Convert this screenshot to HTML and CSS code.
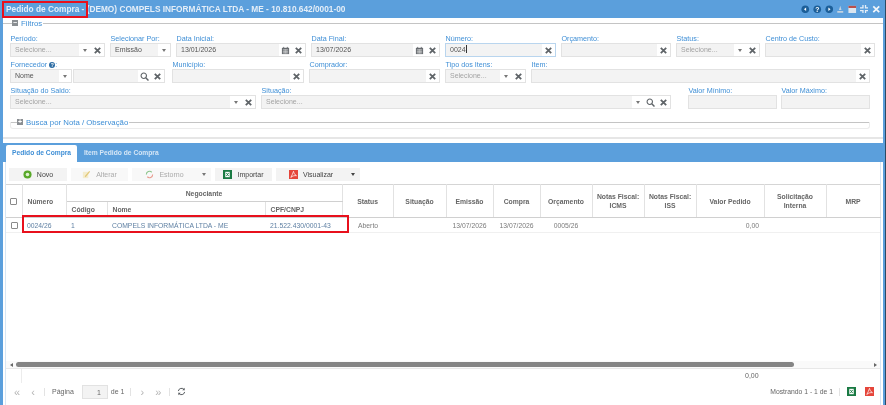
FILE: index.html
```html
<!DOCTYPE html>
<html lang="pt-BR">
<head>
    <meta charset="UTF-8">
    <meta name="viewport" content="width=device-width, initial-scale=1.0">
    <title>Pedido de Compra</title>
    <link rel="stylesheet" href="styles.css">
</head>
<body>
    <svg class="sprites" width="0" height="0">
        <symbol id="i-x" viewBox="0 0 10 10"><path d="M2 2l6 6M8 2l-6 6" stroke="#5f6468" stroke-width="2" fill="none"/></symbol>
        <symbol id="i-search" viewBox="0 0 10 10"><circle cx="4.2" cy="4.2" r="3" stroke="#5f6468" stroke-width="1.2" fill="none"/><path d="M6.4 6.4l3 3" stroke="#5f6468" stroke-width="1.6"/></symbol>
        <symbol id="i-cal" viewBox="0 0 10 10"><path d="M1 2h8v7H1z" fill="#686c70"/><path d="M2 4.2h6M2 6h6M2 7.6h6M3.5 3.5v5M5 3.5v5M6.5 3.5v5" stroke="#eee" stroke-width=".5"/><path d="M3 1v2M7 1v2" stroke="#686c70"/></symbol>
        <symbol id="i-excel" viewBox="0 0 10 10"><path d="M0 0h10v10H0z" fill="#1a7a43"/><path d="M2.5 2v6h5V2z" fill="#fff"/><path d="M3.6 3.2l2.8 3.6M6.4 3.2L3.6 6.8" stroke="#1a7a43" stroke-width="1"/></symbol>
        <symbol id="i-pdf" viewBox="0 0 10 10"><path d="M0 0h10v10H0z" fill="#e5453a"/><path d="M5 1.5c.6 2 1 3.5 3.3 4.8-2-.3-4.5.2-6.3 2 1-2.3 2.5-4.5 3-6.800z" fill="none" stroke="#fff" stroke-width=".8"/></symbol>
    </svg>

    <div class="app">
        <header class="title-bar">
            <h1>Pedido de Compra - (DEMO) COMPELS INFORMÁTICA LTDA - ME - 10.810.642/0001-00</h1>
            <div class="title-icons">
                <svg viewBox="0 0 10 10"><circle cx="5" cy="5" r="4.5" fill="#1c5f99"/><path d="M6 3L3.5 5 6 7z" fill="#fff"/></svg>
                <svg viewBox="0 0 10 10"><circle cx="5" cy="5" r="4.5" fill="#1c5f99"/><text x="5" y="8" class="help-mark">?</text></svg>
                <svg viewBox="0 0 10 10"><circle cx="5" cy="5" r="4.5" fill="#1c5f99"/><path d="M4 3l2.5 2L4 7z" fill="#fff"/></svg>
                <svg viewBox="0 0 10 10"><path d="M5 1l1.5 5h-3zM1.5 7h7v2h-7z" fill="#c3d2e0"/></svg>
                <svg viewBox="0 0 10 10"><path d="M.5 1h9v8.5h-9z" fill="#dbe6f0"/><path d="M.5 1h9v2.5h-9z" fill="#b9504b"/></svg>
                <svg viewBox="0 0 10 10"><path d="M3.5 0v3.5H0M6.5 0v3.5H10M3.5 10V6.5H0M6.5 10V6.5H10" stroke="#e6eff8" stroke-width="1.5" fill="none"/></svg>
                <svg viewBox="0 0 10 10"><path d="M1.5 1.5l7 7M8.5 1.5l-7 7" stroke="#f2f6fa" stroke-width="2"/></svg>
            </div>
        </header>

        <main class="panel">
            <section class="filters">
                <div class="fieldset-head filter-head"><span class="rule-start"></span><span class="toggle">−</span><span class="legend">Filtros</span><span class="rule"></span></div>

                <div class="form-row row-a">
                    <div class="field">
                        <label>Período:</label>
                        <div class="control"><span class="value muted">Selecione...</span><span class="caret"></span><svg class="ico"><use href="#i-x"/></svg></div>
                    </div>
                    <div class="field">
                        <label>Selecionar Por:</label>
                        <div class="control"><span class="value">Emissão</span><span class="caret"></span></div>
                    </div>
                    <div class="field">
                        <label>Data Inicial:</label>
                        <div class="control"><span class="value">13/01/2026</span><svg class="ico"><use href="#i-cal"/></svg><svg class="ico"><use href="#i-x"/></svg></div>
                    </div>
                    <div class="field">
                        <label>Data Final:</label>
                        <div class="control"><span class="value">13/07/2026</span><svg class="ico"><use href="#i-cal"/></svg><svg class="ico"><use href="#i-x"/></svg></div>
                    </div>
                    <div class="field">
                        <label>Número:</label>
                        <div class="control focused"><span class="value">0024<i class="cursor"></i></span><svg class="ico"><use href="#i-x"/></svg></div>
                    </div>
                    <div class="field">
                        <label>Orçamento:</label>
                        <div class="control"><span class="value"></span><svg class="ico"><use href="#i-x"/></svg></div>
                    </div>
                    <div class="field">
                        <label>Status:</label>
                        <div class="control"><span class="value muted">Selecione...</span><span class="caret"></span><svg class="ico"><use href="#i-x"/></svg></div>
                    </div>
                    <div class="field">
                        <label>Centro de Custo:</label>
                        <div class="control"><span class="value"></span><svg class="ico"><use href="#i-x"/></svg></div>
                    </div>
                </div>

                <div class="form-row row-b">
                    <div class="field">
                        <label>Fornecedor <span class="info">?</span>:</label>
                        <div class="joined">
                            <div class="control name-select"><span class="value">Nome</span><span class="caret"></span></div>
                            <div class="control"><span class="value"></span><svg class="ico"><use href="#i-search"/></svg><svg class="ico"><use href="#i-x"/></svg></div>
                        </div>
                    </div>
                    <div class="field">
                        <label>Município:</label>
                        <div class="control"><span class="value"></span><svg class="ico"><use href="#i-x"/></svg></div>
                    </div>
                    <div class="field">
                        <label>Comprador:</label>
                        <div class="control"><span class="value"></span><svg class="ico"><use href="#i-x"/></svg></div>
                    </div>
                    <div class="field">
                        <label>Tipo dos Itens:</label>
                        <div class="control"><span class="value muted">Selecione...</span><span class="caret"></span><svg class="ico"><use href="#i-x"/></svg></div>
                    </div>
                    <div class="field">
                        <label>Item:</label>
                        <div class="control"><span class="value"></span><svg class="ico"><use href="#i-x"/></svg></div>
                    </div>
                </div>

                <div class="form-row row-c">
                    <div class="field">
                        <label>Situação do Saldo:</label>
                        <div class="control"><span class="value muted">Selecione...</span><span class="caret"></span><svg class="ico"><use href="#i-x"/></svg></div>
                    </div>
                    <div class="field">
                        <label>Situação:</label>
                        <div class="control"><span class="value muted">Selecione...</span><span class="caret"></span><svg class="ico"><use href="#i-search"/></svg><svg class="ico"><use href="#i-x"/></svg></div>
                    </div>
                    <div class="field">
                        <label>Valor Mínimo:</label>
                        <div class="control"><span class="value"></span></div>
                    </div>
                    <div class="field">
                        <label>Valor Máximo:</label>
                        <div class="control"><span class="value"></span></div>
                    </div>
                </div>

                <div class="fieldset-head search-head"><span class="rule-start"></span><span class="toggle">+</span><span class="legend">Busca por Nota / Observação</span><span class="rule"></span></div>
            </section>

            <section class="results">
                <nav class="tabs">
                    <a class="tab active">Pedido de Compra</a>
                    <a class="tab">Item Pedido de Compra</a>
                </nav>

                <div class="tab-body">
                    <div class="toolbar">
                        <button class="btn btn-novo">
                            <svg viewBox="0 0 10 10"><circle cx="5" cy="5" r="4.5" fill="#58a829"/><circle cx="5" cy="5" r="2" fill="#dff0d0"/></svg>Novo
                        </button>
                        <button class="btn off btn-alterar">
                            <svg viewBox="0 0 10 10"><path d="M1 2h6v7H1z" fill="#f4eccd"/><path d="M3 7l5-6 1 1-5 6z" fill="#e2c777"/></svg>Alterar
                        </button>
                        <button class="btn off btn-estorno">
                            <svg viewBox="0 0 10 10"><path d="M1.5 5a3.5 3.5 0 0 1 6-2.5" stroke="#8cc58c" stroke-width="1.2" fill="none"/><path d="M8.5 5a3.5 3.5 0 0 1-6 2.5" stroke="#e79a8c" stroke-width="1.2" fill="none"/></svg>Estorno
                        </button>
                        <button class="btn off caret-btn"><span class="caret"></span></button>
                        <button class="btn btn-importar"><svg><use href="#i-excel"/></svg>Importar</button>
                        <button class="btn btn-visualizar"><svg><use href="#i-pdf"/></svg>Visualizar</button>
                        <button class="btn caret-btn"><span class="caret dark"></span></button>
                    </div>

                    <div class="grid-wrap">
                        <table class="grid">
                            <colgroup>
                                <col class="c-check"><col class="c-num"><col class="c-cod"><col class="c-nome"><col class="c-cnpj">
                                <col class="c-status"><col class="c-sit"><col class="c-date"><col class="c-date"><col class="c-orc">
                                <col class="c-nf"><col class="c-nf"><col class="c-valor"><col class="c-sol"><col class="c-mrp">
                            </colgroup>
                            <thead>
                                <tr class="head-top">
                                    <th rowspan="2"><span class="check"></span></th>
                                    <th rowspan="2" class="left">Número</th>
                                    <th colspan="3">Negociante</th>
                                    <th rowspan="2">Status</th>
                                    <th rowspan="2">Situação</th>
                                    <th rowspan="2">Emissão</th>
                                    <th rowspan="2">Compra</th>
                                    <th rowspan="2">Orçamento</th>
                                    <th rowspan="2">Notas Fiscal:<br>ICMS</th>
                                    <th rowspan="2">Notas Fiscal:<br>ISS</th>
                                    <th rowspan="2">Valor Pedido</th>
                                    <th rowspan="2">Solicitação<br>Interna</th>
                                    <th rowspan="2">MRP</th>
                                </tr>
                                <tr>
                                    <th class="left">Código</th>
                                    <th class="left">Nome</th>
                                    <th class="left">CPF/CNPJ</th>
                                </tr>
                            </thead>
                            <tbody>
                                <tr>
                                    <td class="center"><span class="check"></span></td>
                                    <td class="link">0024/26</td>
                                    <td class="link">1</td>
                                    <td class="link">COMPELS INFORMÁTICA LTDA - ME</td>
                                    <td class="link">21.522.430/0001-43</td>
                                    <td class="status-cell">Aberto</td>
                                    <td></td>
                                    <td class="center">13/07/2026</td>
                                    <td class="center">13/07/2026</td>
                                    <td class="center">0005/26</td>
                                    <td></td>
                                    <td></td>
                                    <td class="right">0,00</td>
                                    <td></td>
                                    <td></td>
                                </tr>
                            </tbody>
                        </table>
                        <div class="selected-mark"></div>
                    </div>

                    <div class="scrollbar">
                        <span class="arrow left-arrow"></span>
                        <div class="track"><div class="thumb"></div></div>
                        <span class="arrow right-arrow"></span>
                    </div>

                    <div class="totals"><span class="totals-check"></span><span class="totals-value">0,00</span></div>

                    <footer class="pager">
                        <span class="pg">«</span><span class="pg">‹</span><span class="sep"></span>
                        <span class="pg-label">Página</span><span class="page-input">1</span><span>de 1</span><span class="sep"></span>
                        <span class="pg">›</span><span class="pg">»</span><span class="sep"></span>
                        <svg class="refresh" viewBox="0 0 10 10"><path d="M1.5 4.5A3.6 3.6 0 0 1 8 3M8.5 5.5A3.6 3.6 0 0 1 2 7" stroke="#55595d" stroke-width="1.1" fill="none"/><path d="M8.5 .8V3.5H5.8zM1.5 9.2V6.5H4.2z" fill="#55595d"/></svg>
                        <span class="pager-info">Mostrando 1 - 1 de 1</span><span class="sep"></span>
                        <svg class="export"><use href="#i-excel"/></svg>
                        <svg class="export"><use href="#i-pdf"/></svg>
                    </footer>
                </div>
            </section>
        </main>
        <div class="selected-title"></div>
    </div>
</body>
</html>
```

FILE: styles.css
```css
* {
    box-sizing: border-box;
}

html, body {
    margin: 0;
    height: 100%;
    overflow: hidden;
}

body {
    font-family: "Liberation Sans", Arial, sans-serif;
    font-size: 7px;
    color: #555;
    background-color: #fff;
}

.sprites {
    position: absolute;
}

.app {
    position: relative;
    width: 886px;
    height: 405px;
    background-color: #fff;
    border-right: 1px solid #2c4a63;
    filter: blur(0.3px); /* the capture is soft, scaled down */
}

/* Title bar */
.title-bar {
    display: flex;
    align-items: center;
    justify-content: space-between;
    height: 18px;
    padding: 0 5px 0 6px;
    background-color: #5b9fdc;
}

.title-bar h1 {
    margin: 0;
    font-size: 8.3px;
    font-weight: bold;
    color: #e4eef8;
    white-space: nowrap;
}

.title-icons {
    display: flex;
    align-items: center;
    gap: 3.2px;
}

.title-icons svg {
    width: 8.5px;
    height: 8.5px;
}

.help-mark {
    font-size: 8px;
    font-weight: bold;
    fill: #fff;
    text-anchor: middle;
}

.selected-title {
    position: absolute;
    top: 1px;
    left: 2px;
    width: 86px;
    height: 17px;
    border: 2px solid #e8101c;
}

/* Panel + filters */
.panel {
    border-left: 3px solid #5b9fdc;
    border-right: 2px solid #5b9fdc;
    height: 387px;
    display: flex;
    flex-direction: column;
}

.filters {
    height: 121px;
    padding-left: 7px;
    border-bottom: 2px solid #e6e6e6;
}

.fieldset-head {
    display: flex;
    align-items: center;
    height: 10px;
}

.filter-head {
    margin-left: -7px;
}

.filter-head .rule-start {
    width: 9px;
}

.rule-start {
    width: 7px;
    height: 1px;
    background-color: #c4c4c4;
}

.toggle {
    width: 6px;
    height: 6px;
    margin-right: 3px;
    line-height: 6px;
    font-size: 7px;
    font-weight: bold;
    text-align: center;
    color: #fff;
    background-color: #8b8f93;
}

.legend {
    font-size: 7.8px;
    color: #3f8fd6;
    white-space: nowrap;
}

.rule {
    flex: 1;
    height: 1px;
    margin-left: 1px;
    background-color: #c4c4c4;
}

.search-head {
    position: relative;
    margin-top: 8px;
    margin-right: 13px;
}

/* lower half of the collapsed fieldset */
.search-head::after {
    content: "";
    position: absolute;
    left: 0;
    right: 0;
    top: 5px;
    height: 6px;
    border: 1px solid #ececec;
    border-top: none;
    border-radius: 0 0 3px 3px;
}

.form-row {
    display: grid;
    margin-top: 3px;
}

.row-a {
    grid-template-columns: 100px 66px 135px 134px 116px 115px 89px 110px;
    margin-top: 6px;
}

.row-b {
    grid-template-columns: 162px 137px 136px 86px 339px;
}

.row-c {
    grid-template-columns: 251px 427px 93px 89px;
}

.field {
    padding-right: 5px;
}

.field:last-child {
    padding-right: 0;
}

.row-b .field:first-child {
    padding-right: 7px;
}

.row-c .field:nth-child(2) {
    padding-right: 17px;
}

.row-c .field:nth-child(3) {
    padding-right: 4px;
}

.field label {
    display: block;
    height: 9px;
    padding-left: 0.5px;
    line-height: 9px;
    font-size: 7.2px;
    color: #3f8fd6;
    white-space: nowrap;
}

.info {
    display: inline-block;
    width: 6px;
    height: 6px;
    line-height: 6px;
    border-radius: 50%;
    font-size: 5px;
    font-weight: bold;
    text-align: center;
    color: #fff;
    background-color: #2d6ca3;
}

.control {
    display: flex;
    align-items: center;
    height: 14px;
    border: 1px solid #e2e2e2;
    background-color: #fff;
}

.control.focused {
    border-color: #b9d5ee;
}

.value {
    flex: 1;
    min-width: 0;
    align-self: stretch;
    padding-left: 4px;
    line-height: 12px;
    font-size: 7px;
    color: #555;
    background-color: #f3f3f3;
    white-space: nowrap;
    overflow: hidden;
}

.muted {
    color: #a3a3a3;
}

.cursor {
    display: inline-block;
    width: 1px;
    height: 8px;
    vertical-align: -1px;
    background-color: #333;
}

.caret {
    display: block;
    width: 0;
    height: 0;
    margin: 0 4px;
    border-left: 2.5px solid transparent;
    border-right: 2.5px solid transparent;
    border-top: 3px solid #777;
}

.caret.dark {
    border-top-color: #444;
}

.ico {
    flex: none;
    width: 9px;
    height: 9px;
    margin: 0 2px;
}

.joined {
    display: flex;
    gap: 1px;
}

.name-select {
    flex: none;
    width: 62px;
}

.joined .control:last-child {
    flex: 1;
}

/* Results area */
.results {
    flex: 1;
    margin-top: 4px;
    display: flex;
    flex-direction: column;
    min-height: 0;
}

.tabs {
    display: flex;
    align-items: flex-end;
    flex: none;
    height: 19px;
    padding-left: 3px;
    background-color: #5b9fdc;
}

.tab {
    height: 17px;
    padding: 0 7px;
    line-height: 16px;
    font-size: 6.7px;
    font-weight: bold;
    color: #d5e6f6;
    white-space: nowrap;
}

.tab.active {
    width: 71px;
    padding: 0 6px;
    color: #3f8fd6;
    background-color: #fff;
    border-radius: 2px 2px 0 0;
}

.tab-body {
    flex: 1;
    min-height: 0;
    display: flex;
    flex-direction: column;
    margin: 0 2px;
    border-left: 1px solid #d6e6f5;
    border-right: 1px solid #d6e6f5;
}

.toolbar {
    display: flex;
    flex: none;
    gap: 4px;
    height: 22px;
    padding: 6px 0 0 3px;
}

.btn {
    display: flex;
    align-items: center;
    justify-content: center;
    gap: 5px;
    height: 13px;
    padding: 0;
    border: none;
    font-family: inherit;
    font-size: 7px;
    color: #444;
    background-color: #f3f3f3;
}

.btn svg {
    width: 9px;
    height: 9px;
}

.btn.off {
    color: #aaa;
    background-color: #f8f8f8;
}

.btn-novo { width: 58px; }
.btn-alterar { width: 57px; }
.btn-estorno { width: 65px; margin-right: -4px; }
.btn-importar { width: 57px; }
.btn-visualizar { width: 70px; margin-right: -4px; }
.btn.caret-btn { width: 14px; }

.grid-wrap {
    position: relative;
    flex: 1;
    min-height: 0;
}

.grid {
    width: 874px;
    border-collapse: collapse;
    table-layout: fixed;
    border-top: 1px solid #d5d5d5;
}

.c-check { width: 16px; }
.c-num { width: 44px; }
.c-cod { width: 41px; }
.c-nome { width: 158px; }
.c-cnpj { width: 77px; }
.c-status { width: 51px; }
.c-sit { width: 53px; }
.c-date { width: 47px; }
.c-orc { width: 52px; }
.c-nf { width: 52px; }
.c-valor { width: 68px; }
.c-sol { width: 62px; }
.c-mrp { width: 54px; }

.grid th {
    height: 16px;
    padding: 0 1px;
    font-size: 6.8px;
    line-height: 9px;
    font-weight: bold;
    color: #666;
    text-align: center;
    border: 1px solid #e2e2e2;
    border-top: none;
    border-bottom-color: #d0d0d0;
}

.grid .head-top th {
    height: 17px;
}

.grid th:first-child {
    border-left: none;
}

.grid th.left {
    text-align: left;
    padding-left: 5px;
}

.grid td {
    height: 15px;
    padding: 0 5px;
    font-size: 6.8px;
    color: #7b7b7b;
    white-space: nowrap;
    overflow: hidden;
    border-bottom: 1px solid #f0f0f0;
}

.grid td.link {
    color: #5f80a3;
}

.grid td.center {
    text-align: center;
    padding: 0;
}

.grid td.right {
    text-align: right;
    padding-right: 5px;
}

.grid td.status-cell {
    padding-left: 16px;
}

.check {
    display: inline-block;
    width: 7px;
    height: 7px;
    vertical-align: middle;
    border: 1px solid #8a8a8a;
    border-radius: 1px;
    background-color: #fff;
}

.selected-mark {
    position: absolute;
    top: 31px;
    left: 16px;
    width: 327px;
    height: 18px;
    border: 2px solid #e8101c;
    pointer-events: none;
}

.scrollbar {
    display: flex;
    align-items: center;
    flex: none;
    height: 7px;
    padding: 0 3px 0 4px;
    background-color: #fafafa;
}

.track {
    flex: 1;
    margin: 0 3px;
}

.thumb {
    width: 778px;
    height: 5px;
    border-radius: 2.5px;
    background-color: #858585;
}

.arrow {
    width: 0;
    height: 0;
    border-top: 2.5px solid transparent;
    border-bottom: 2.5px solid transparent;
}

.left-arrow {
    border-right: 3px solid #666;
}

.right-arrow {
    border-left: 3px solid #666;
}

.totals {
    display: flex;
    flex: none;
    height: 15px;
    border-top: 1px solid #e8e8e8;
    line-height: 13px;
    font-size: 7px;
    color: #666;
}

.totals-check {
    width: 16px;
    border-right: 1px solid #ececec;
}

.totals-value {
    margin-left: 723px;
}

.pager {
    display: flex;
    align-items: center;
    flex: none;
    gap: 6px;
    height: 22px;
    padding: 0 6px 5px 6px;
    font-size: 7px;
    color: #666;
}

.pg {
    width: 10px;
    font-size: 11px;
    text-align: center;
    color: #b5b5b5;
}

.pg-label {
    margin: 0 2px 0 1px;
}

.sep {
    width: 1px;
    height: 8px;
    background-color: #e3e3e3;
}

.page-input {
    width: 26px;
    height: 14px;
    margin-right: -3px;
    padding-right: 6px;
    line-height: 13px;
    text-align: right;
    border: 1px solid #e2e2e2;
    background-color: #f3f3f3;
}

.refresh {
    width: 9px;
    height: 9px;
    margin-left: 1px;
}

.pager-info {
    margin-left: auto;
    font-size: 6.8px;
}

.export {
    width: 9px;
    height: 9px;
    margin-left: 1px;
}

.export + .export {
    margin-left: 3px;
}
```
